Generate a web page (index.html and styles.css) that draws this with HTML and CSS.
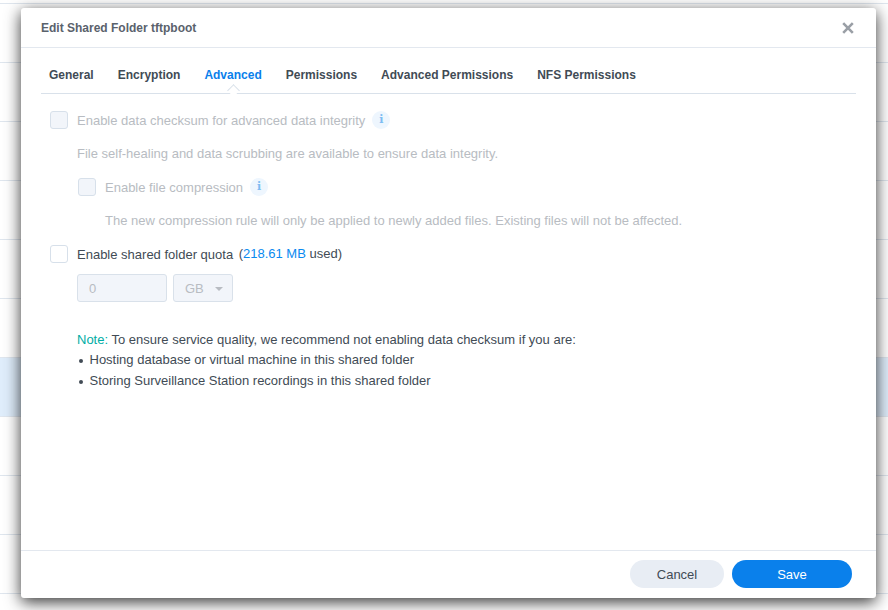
FILE: index.html
```html
<!DOCTYPE html>
<html lang="en">
<head>
<meta charset="utf-8">
<title>Edit Shared Folder</title>
<link rel="stylesheet" href="styles.css">
</head>
<body>
<div class="rows">
  <div class="row"></div><div class="row"></div><div class="row"></div><div class="row"></div><div class="row"></div>
  <div class="row"></div><div class="row selected"></div><div class="row"></div><div class="row"></div><div class="row"></div><div class="row"></div>
</div>
<div class="dialog">
  <header class="head">
    <span class="title">Edit Shared Folder tftpboot</span>
    <svg class="close" width="12" height="12" viewBox="0 0 12 12"><path d="M1.2 1.2 10.8 10.8M10.8 1.2 1.2 10.8" stroke="#9a9fa6" stroke-width="2.6" fill="none"/></svg>
  </header>
  <nav class="tabs">
    <span class="tab">General</span>
    <span class="tab">Encryption</span>
    <span class="tab active">Advanced</span>
    <span class="tab">Permissions</span>
    <span class="tab">Advanced Permissions</span>
    <span class="tab">NFS Permissions</span>
  </nav>
  <main class="body">
    <div class="line off"><span class="box off-box"></span><span>Enable data checksum for advanced data integrity</span><span class="info">i</span></div>
    <div class="desc off first">File self-healing and data scrubbing are available to ensure data integrity.</div>
    <div class="line off sub"><span class="box off-box"></span><span>Enable file compression</span><span class="info">i</span></div>
    <div class="desc off sub second">The new compression rule will only be applied to newly added files. Existing files will not be affected.</div>
    <div class="line"><span class="box"></span><span>Enable shared folder quota</span><span class="used">(<span class="blue">218.61 MB</span> used)</span></div>
    <div class="quota">
      <span class="field num">0</span>
      <span class="field unit">GB<i class="caret"></i></span>
    </div>
    <div class="note">
      <p><span class="teal">Note:</span> To ensure service quality, we recommend not enabling data checksum if you are:</p>
      <ul>
        <li>Hosting database or virtual machine in this shared folder</li>
        <li>Storing Surveillance Station recordings in this shared folder</li>
      </ul>
    </div>
  </main>
  <footer class="foot">
    <button class="btn cancel">Cancel</button>
    <button class="btn save">Save</button>
  </footer>
</div>
</body>
</html>
```
FILE: styles.css
```css
html, body { margin: 0; height: 100%; overflow: hidden; }
body { background: #fff; font-family: "Liberation Sans", Arial, sans-serif; font-size: 13px; color: #414b55; position: relative; }
.rows { height: 610px; padding-top: 3px; box-sizing: border-box; overflow: hidden; }
.row { height: 58px; border-top: 1px solid #dfe6ee; }
.row.selected { background: #dfedfb; }
.dialog { position: absolute; left: 21px; top: 8px; width: 855px; height: 590px; background: #fff; border-radius: 3px; box-shadow: 0 4px 16px rgba(0,0,0,.8); display: flex; flex-direction: column; }
.head { height: 39px; flex: none; border-bottom: 1px solid #e3e8ef; padding: 0 22px 0 20px; display: flex; align-items: center; justify-content: space-between; }
.title { font-weight: 700; font-size: 12px; color: #5a626c; }
.tabs { margin: 0 20px; height: 46px; flex: none; border-bottom: 1px solid #d9e1ea; display: flex; gap: 24px; padding: 8px 8px 0; align-items: center; box-sizing: border-box; position: relative; }
.tab { font-weight: 700; font-size: 12px; color: #414b55; position: relative; }
.tab.active { color: #0a80eb; }
.tab.active::after { content: ""; position: absolute; left: 50%; bottom: -13px; width: 8px; height: 8px; margin-left: -4px; background: #fff; border-left: 1px solid #d9e1ea; border-top: 1px solid #d9e1ea; transform: rotate(45deg); }
.body { flex: 1; padding: 17px 29px 0; }
.line { display: flex; align-items: center; height: 18px; }
.box { width: 16px; height: 16px; border: 1px solid #d7e0ea; border-radius: 3px; background: #fff; margin-right: 9px; flex: none; }
.off-box { background: #f2f5fa; }
.off { color: #b8bcc2; }
.sub { margin-left: 28px; }
.desc { margin-left: 27px; height: 16px; line-height: 16px; }
.desc.sub { margin-left: 55px; }
.desc.first { margin-top: 17px; margin-bottom: 16px; }
.desc.second { margin-top: 17px; margin-bottom: 16px; }
.info { width: 18px; height: 18px; border-radius: 50%; background: #eef6fe; color: #7dbcf2; margin-left: 7px; font: 700 11px/18px "DejaVu Serif", serif; text-align: center; }
.used { margin-left: 5.5px; margin-top: -1px; }
.blue { color: #0a8af0; }
.teal { color: #00ada5; }
.quota { display: flex; gap: 6px; margin: 11px 0 0 27px; }
.field { height: 25px; line-height: 25px; padding-top: 1px; border: 1px solid #d9e1ea; border-radius: 3px; background: #f2f5fa; color: #b8bcc2; padding-left: 11px; padding-right: 11px; font-size: 13px; }
.num { width: 66px; }
.unit { width: 38px; padding-right: 9px; display: flex; align-items: center; justify-content: space-between; }
.caret { width: 0; height: 0; border: 4.5px solid transparent; border-top: 4px solid #b8bcc2; border-bottom: 0; }
.note { margin: 28px 0 0 27px; line-height: 20.4px; }
.note p { margin: 0; }
.note ul { margin: 0; padding: 0; list-style: none; }
.note li { padding-left: 12.5px; position: relative; }
.note li::before { content: ""; position: absolute; left: 2px; top: 9px; width: 4px; height: 4px; border-radius: 50%; background: #414b55; }
.foot { flex: none; border-top: 1px solid #e3e8ef; display: flex; justify-content: flex-end; align-items: center; gap: 8px; padding: 0 24px 1px; height: 46px; }
.btn { height: 28px; border: 0; border-radius: 14px; font: 13px "Liberation Sans", Arial, sans-serif; padding: 0; }
.cancel { width: 94px; background: #e8edf4; color: #414b55; }
.save { width: 120px; background: #0a80eb; color: #fff; }
```
